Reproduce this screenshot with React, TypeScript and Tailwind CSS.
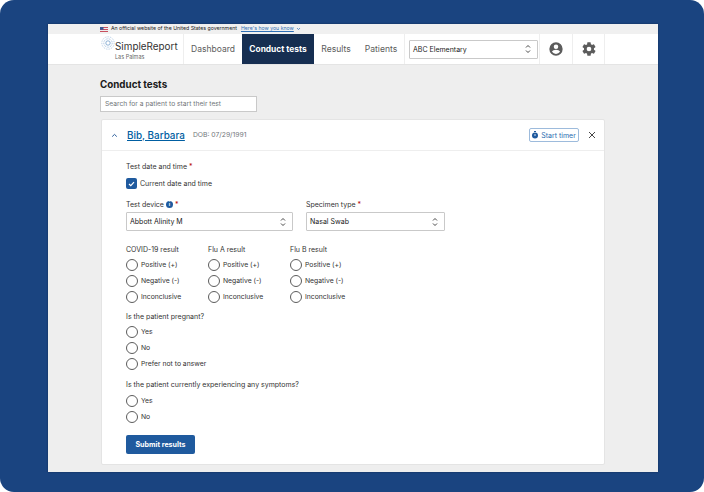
import React from "react";

const font = { fontFamily: "Inter, 'Noto Sans', sans-serif" };

function Radio({ label }: { label: string }) {
  return (
    <div className="flex h-[16px] items-center gap-[3px]">
      <span className="h-[12px] w-[12px] shrink-0 rounded-full border border-[#5c5c5c] bg-white" />
      <span className="text-[6.8px] leading-none text-[#333] whitespace-nowrap">{label}</span>
    </div>
  );
}

function Updown() {
  return (
    <svg width="6" height="10" viewBox="0 0 6 10" className="shrink-0">
      <path d="M1 3.5 3 1.5 5 3.5M1 6.5 3 8.5 5 6.5" fill="none" stroke="#333" strokeWidth="0.9" />
    </svg>
  );
}

function Select({ text, w }: { text: string; w: string }) {
  return (
    <div className={`${w} flex h-[19px] items-center justify-between rounded-[1px] border border-[#c9c9c9] bg-white pl-[3px] pr-[6px]`}>
      <span className="text-[7px] leading-none text-[#1b1b1b]">{text}</span>
      <Updown />
    </div>
  );
}

function ResultCol({ title, w }: { title: string; w: string }) {
  return (
    <div className={w}>
      <div className="mb-[2px] h-[10px] text-[7px] leading-[10px] text-[#333]">{title}</div>
      <div className="flex flex-col">
        <Radio label="Positive (+)" />
        <Radio label="Negative (-)" />
        <Radio label="Inconclusive" />
      </div>
    </div>
  );
}

function Logo() {
  return (
    <svg width="14" height="14" viewBox="0 0 14 14" className="absolute left-[0.5px] top-[2px]">
      <circle cx="7" cy="7" r="6.2" fill="none" stroke="#8fb4d9" strokeWidth="0.7" strokeDasharray="0.9 0.9" />
      <circle cx="7" cy="7" r="4.2" fill="none" stroke="#7aa5d0" strokeWidth="0.7" strokeDasharray="0.9 0.8" />
      <circle cx="7" cy="7" r="2.2" fill="none" stroke="#5f92c4" strokeWidth="0.7" />
    </svg>
  );
}

export default function App() {
  return (
    <div className="h-[492px] w-[704px] overflow-hidden bg-white" style={font}>
      <div className="flex h-[492px] flex-col rounded-[14px] bg-[#1a4480] pb-[20px] pl-[48px] pr-[46px] pt-[24px]">
        <div className="flex h-[448px] flex-col overflow-hidden bg-[#eeeeee] shadow-[0_0_2px_rgba(0,0,0,0.35)]">
          {/* gov banner */}
          <div className="flex h-[10px] shrink-0 items-center bg-[#f0f0f0] pl-[52px]">
            <svg width="8" height="5" viewBox="0 0 8 5" className="mr-[3px]">
              <rect width="8" height="5" fill="#c8505e" />
              <rect y="1" width="8" height="1" fill="#eee" />
              <rect y="3" width="8" height="1" fill="#eee" />
              <rect width="3.5" height="2.8" fill="#3d5a94" />
            </svg>
            <span className="text-[5.2px] leading-none text-[#1b1b1b]">An official website of the United States government</span>
            <span className="ml-[4px] text-[5.2px] leading-none text-[#2f6fb5] underline">Here's how you know</span>
            <svg width="5" height="4" viewBox="0 0 5 4" className="ml-[2px]">
              <path d="M1 1 2.5 2.6 4 1" fill="none" stroke="#2f6fb5" strokeWidth="0.7" />
            </svg>
          </div>
          {/* header */}
          <div className="flex h-[30px] shrink-0 items-stretch bg-white pl-[52px]">
            <div className="relative w-[84px] border-r border-[#eeeeee]">
              <Logo />
              <div className="absolute left-[15px] top-[6.5px] text-[9.9px] leading-[11px] text-[#333]">SimpleReport</div>
              <div className="absolute left-[15px] top-[19.5px] text-[5.5px] leading-[7px] text-[#666]">Las Palmas</div>
            </div>
            <div className="flex w-[58px] items-center justify-center text-[8.5px] text-[#5c5c5c]">Dashboard</div>
            <div className="flex w-[72px] items-center justify-center bg-[#162e51] text-[8.4px] font-bold text-white">Conduct tests</div>
            <div className="flex w-[44px] items-center justify-center text-[8.6px] text-[#5c5c5c]">Results</div>
            <div className="flex w-[47px] items-center justify-center border-r border-[#eeeeee] text-[8.6px] text-[#5c5c5c]">Patients</div>
            <div className="flex w-[135px] items-center border-r border-[#eeeeee] pl-[4px]">
              <div className="flex h-[19px] w-[129px] items-center justify-between rounded-[1px] border border-[#c9c9c9] bg-white pl-[3px] pr-[6px]">
                <span className="text-[7px] leading-none text-[#1b1b1b]">ABC Elementary</span>
                <Updown />
              </div>
            </div>
            <div className="flex w-[33px] items-center justify-center border-r border-[#eeeeee]">
              <svg width="16" height="16" viewBox="0 0 24 24">
                <path fill="#5c5c5c" d="M12 2a10 10 0 1 0 0 20 10 10 0 0 0 0-20Zm0 3.2a3.4 3.4 0 1 1 0 6.8 3.4 3.4 0 0 1 0-6.8Zm0 14.2a7.4 7.4 0 0 1-6-3.2c.03-2 4-3.1 6-3.1s5.97 1.1 6 3.1a7.4 7.4 0 0 1-6 3.2Z" />
              </svg>
            </div>
            <div className="flex w-[32px] items-center justify-center border-r border-[#eeeeee]">
              <svg width="16" height="16" viewBox="0 0 24 24">
                <path fill="#5c5c5c" d="M19.4 13c.04-.33.06-.66.06-1s-.02-.67-.07-1l2.1-1.65a.5.5 0 0 0 .12-.64l-2-3.46a.5.5 0 0 0-.6-.22l-2.49 1a7.3 7.3 0 0 0-1.69-.98l-.38-2.65A.49.49 0 0 0 14 2h-4a.49.49 0 0 0-.49.42l-.38 2.65c-.61.25-1.17.59-1.69.98l-2.49-1a.5.5 0 0 0-.6.22l-2 3.46a.5.5 0 0 0 .12.64L4.57 11a7.9 7.9 0 0 0 0 2l-2.1 1.65a.5.5 0 0 0-.12.64l2 3.46c.12.22.38.3.6.22l2.49-1c.52.4 1.08.73 1.69.98l.38 2.65c.03.24.24.42.49.42h4c.25 0 .46-.18.49-.42l.38-2.65c.61-.25 1.17-.59 1.69-.98l2.49 1c.23.08.48 0 .6-.22l2-3.46a.5.5 0 0 0-.12-.64L19.4 13ZM12 15.5a3.5 3.5 0 1 1 0-7 3.5 3.5 0 0 1 0 7Z" />
              </svg>
            </div>
          </div>
          {/* main */}
          <div className="flex flex-1 flex-col border-t border-[#e4e4e4] pl-[52px] pr-[53px]">
            <div className="mt-[13px] text-[9.8px] font-bold leading-[14px] text-[#1b1b1b]">Conduct tests</div>
            <div className="mt-[4px] flex h-[16px] w-[157px] items-center border border-[#c9c9c9] bg-white pl-[4px] text-[6.7px] leading-none text-[#71767a]">
              Search for a patient to start their test
            </div>
            {/* card */}
            <div className="ml-[1px] mt-[7px] flex-1 rounded-[2px] border border-[#e4e4e4] bg-white">
              <div className="flex h-[31px] items-center border-b border-[#eeeeee] pr-[8px]">
                <svg width="7" height="5" viewBox="0 0 7 5" className="ml-[9px]">
                  <path d="M1.2 3.6 3.5 1.4 5.8 3.6" fill="none" stroke="#2a5d9b" strokeWidth="1" />
                </svg>
                <span className="ml-[9px] text-[9.9px] font-medium leading-[12px] text-[#005ea2] underline">Bib, Barbara</span>
                <span className="ml-[8px] text-[6.8px] leading-none text-[#71767a]">DOB: 07/29/1991</span>
                <div className="ml-auto flex h-[14px] w-[50px] items-center justify-center gap-[3px] rounded-[2px] border border-[#9dbbdc] bg-white">
                  <svg width="6" height="8" viewBox="0 0 6 8">
                    <rect x="2" y="0" width="2" height="1" fill="#1f5a9e" />
                    <circle cx="3" cy="4.6" r="3" fill="#1f5a9e" />
                    <rect x="2.6" y="3" width="0.8" height="2" fill="#fff" />
                  </svg>
                  <span className="text-[7px] leading-none text-[#2a6db0]">Start timer</span>
                </div>
                <svg width="8" height="8" viewBox="0 0 8 8" className="ml-[9px]">
                  <path d="M1 1 7 7M7 1 1 7" stroke="#333" strokeWidth="0.9" />
                </svg>
              </div>
              <div className="pl-[24px] pt-[11px]">
                <div className="h-[10px] text-[7px] leading-[10px] text-[#333]">
                  Test date and time <span className="text-[#b50909]">*</span>
                </div>
                <div className="mt-[6px] flex h-[11px] items-center gap-[3px]">
                  <span className="flex h-[11px] w-[11px] items-center justify-center rounded-[2px] bg-[#1f5a9e]">
                    <svg width="7" height="6" viewBox="0 0 7 6">
                      <path d="M1 3 2.8 4.7 6 1.2" fill="none" stroke="#fff" strokeWidth="1.2" />
                    </svg>
                  </span>
                  <span className="text-[7px] leading-none text-[#333]">Current date and time</span>
                </div>
                <div className="mt-[10px] flex gap-[13px]">
                  <div>
                    <div className="mb-[3px] flex h-[10px] items-center text-[7px] leading-none text-[#333]">
                      Test device
                      <span className="ml-[2px] flex h-[7px] w-[7px] items-center justify-center rounded-full bg-[#1f5a9e] text-[5px] font-bold text-white">i</span>
                      <span className="ml-[2px] text-[#b50909]">*</span>
                    </div>
                    <Select text="Abbott Alinity M" w="w-[167px]" />
                  </div>
                  <div>
                    <div className="mb-[3px] flex h-[10px] items-center gap-[2px] text-[7px] leading-none text-[#333]">
                      Specimen type <span className="text-[#b50909]">*</span>
                    </div>
                    <Select text="Nasal Swab" w="w-[139px]" />
                  </div>
                </div>
                <div className="mt-[14px] flex">
                  <ResultCol title="COVID-19 result" w="w-[82px]" />
                  <ResultCol title="Flu A result" w="w-[82px]" />
                  <ResultCol title="Flu B result" w="w-[82px]" />
                </div>
                <div className="mt-[7px] h-[10px] text-[7px] leading-[10px] text-[#333]">Is the patient pregnant?</div>
                <div className="mt-[2px] flex flex-col">
                  <Radio label="Yes" />
                  <Radio label="No" />
                  <Radio label="Prefer not to answer" />
                </div>
                <div className="mt-[8px] h-[10px] text-[7px] leading-[10px] text-[#333]">Is the patient currently experiencing any symptoms?</div>
                <div className="mt-[3px] flex flex-col">
                  <Radio label="Yes" />
                  <Radio label="No" />
                </div>
                <div className="mt-[10px] flex h-[19px] w-[69px] items-center justify-center rounded-[2px] bg-[#1f5a9e] text-[7.1px] font-bold leading-none text-white">
                  Submit results
                </div>
              </div>
            </div>
            <div className="h-[7px] shrink-0" />
          </div>
        </div>
      </div>
    </div>
  );
}
